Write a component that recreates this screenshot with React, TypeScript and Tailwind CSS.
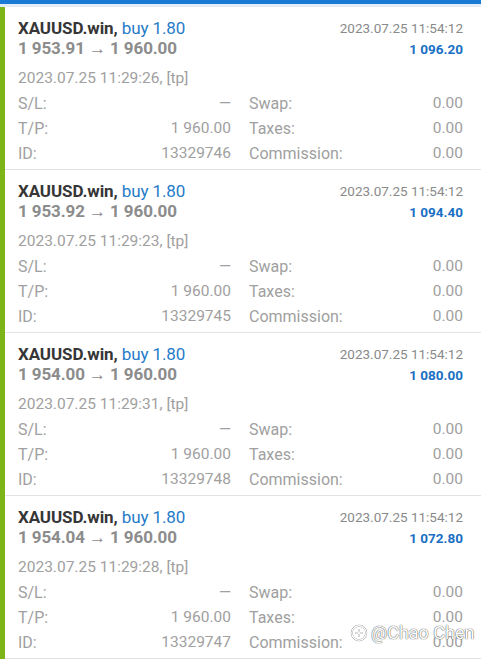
import React from "react";

type Deal = {
  open: string;
  openTime: string;
  id: string;
  profit: string;
};

const deals: Deal[] = [
  { open: "1 953.91", openTime: "2023.07.25 11:29:26, [tp]", id: "13329746", profit: "1 096.20" },
  { open: "1 953.92", openTime: "2023.07.25 11:29:23, [tp]", id: "13329745", profit: "1 094.40" },
  { open: "1 954.00", openTime: "2023.07.25 11:29:31, [tp]", id: "13329748", profit: "1 080.00" },
  { open: "1 954.04", openTime: "2023.07.25 11:29:28, [tp]", id: "13329747", profit: "1 072.80" },
];

function Row({ l1, v1, l2, v2 }: { l1: string; v1: string; l2: string; v2: string }) {
  return (
    <div className="flex h-[25px] items-center text-[15.5px] text-[#a0a0a0]">
      <div className="flex w-[213px] items-center justify-between">
        <span className="text-[16px]">{l1}</span>
        <span>{v1}</span>
      </div>
      <div className="ml-[18px] flex w-[214px] items-center justify-between">
        <span className="text-[16px]">{l2}</span>
        <span>{v2}</span>
      </div>
    </div>
  );
}

function Card({ d }: { d: Deal }) {
  return (
    <div className="flex">
      <div className="w-[5px] shrink-0 bg-[#7cb518]" />
      <div className="flex-1 border-b border-[#e2e2e2] pl-[13px] pr-[18px] pt-[11px] pb-[3px]">
        <div className="flex h-[21px] items-center justify-between">
          <div className="text-[17px] font-bold tracking-[-0.1px] text-[#363636]">
            XAUUSD.win, <span className="font-normal text-[#1f7bc8]">buy 1.80</span>
          </div>
          <div className="text-[13.5px] text-[#8a8a8a]">2023.07.25 11:54:12</div>
        </div>
        <div className="flex h-[20px] items-center justify-between">
          <div className="text-[17px] font-bold tracking-[-0.1px] text-[#8c8c8c]">
            {d.open} → 1 960.00
          </div>
          <div className="text-[13.5px] font-bold text-[#1a6fc4]">{d.profit}</div>
        </div>
        <div className="mt-[7px] flex h-[25px] items-center text-[15.5px] text-[#a0a0a0]">
          {d.openTime}
        </div>
        <Row l1="S/L:" v1="—" l2="Swap:" v2="0.00" />
        <Row l1="T/P:" v1="1 960.00" l2="Taxes:" v2="0.00" />
        <Row l1="ID:" v1={d.id} l2="Commission:" v2="0.00" />
      </div>
    </div>
  );
}

export default function App() {
  return (
    <div
      className="relative h-[666px] w-[481px] overflow-hidden bg-white"
      style={{ fontFamily: "Roboto, 'Noto Sans', sans-serif" }}
    >
      <div className="h-[4px] bg-[#1a7ad6]" />
      <div className="h-[3px] bg-[#e4edf5]" />
      {deals.map((d) => (
        <Card key={d.id} d={d} />
      ))}
      <div className="absolute left-[350px] top-[619px] flex items-center gap-[3px] text-[18px] text-white [text-shadow:0_0_1px_#555,0_0_1px_#555]">
        <svg width="18" height="18" viewBox="0 0 20 20" fill="none" stroke="#fff" strokeWidth="1.6">
          <circle cx="10" cy="10" r="8" stroke="#777" strokeWidth="2.2" />
          <circle cx="10" cy="10" r="8" />
          <path d="M6 10h8M10 6v8" stroke="#777" strokeWidth="2.2" />
          <path d="M6 10h8M10 6v8" />
        </svg>
        <span>@Chao Chen</span>
      </div>
    </div>
  );
}
